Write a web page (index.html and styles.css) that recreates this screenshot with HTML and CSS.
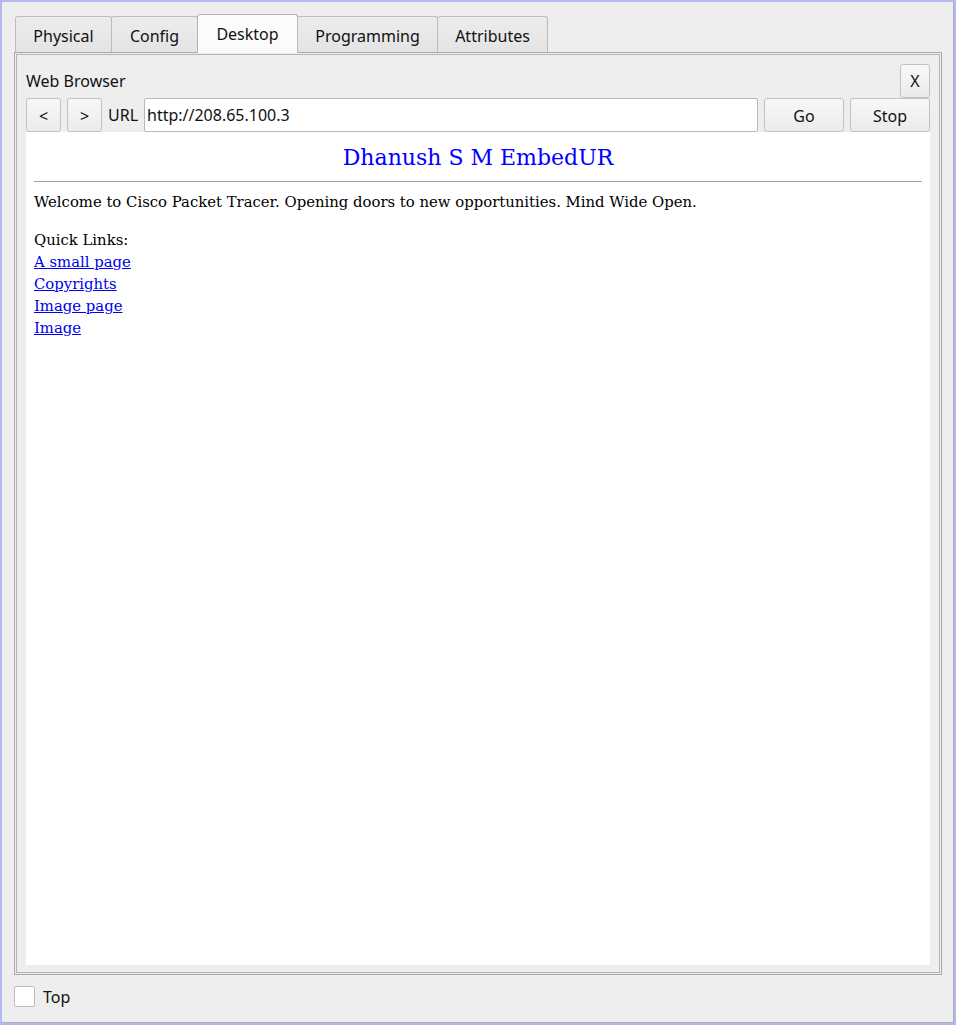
FILE: index.html
```html
<!DOCTYPE html>
<html>
<head>
<meta charset="utf-8">
<link rel="stylesheet" href="styles.css">
</head>
<body>
<div class="window">
  <div class="tabbar">
    <div class="tab t-phys">Physical</div>
    <div class="tab t-conf">Config</div>
    <div class="tab t-desk active">Desktop</div>
    <div class="tab t-prog">Programming</div>
    <div class="tab t-attr">Attributes</div>
  </div>
  <div class="pane">
    <div class="pane-inner">
      <div class="head-row">
        <span class="title">Web Browser</span>
        <button class="btn btn-x">X</button>
      </div>
      <div class="nav-row">
        <button class="btn btn-nav">&lt;</button>
        <button class="btn btn-nav">&gt;</button>
        <span class="url-label">URL</span>
        <div class="url-input">http://208.65.100.3</div>
        <button class="btn btn-wide">Go</button>
        <button class="btn btn-wide">Stop</button>
      </div>
      <div class="webview">
        <div class="heading">Dhanush S M EmbedUR</div>
        <div class="rule"></div>
        <p class="welcome">Welcome to Cisco Packet Tracer. Opening doors to new opportunities. Mind Wide Open.</p>
        <div class="links">
          <div>Quick Links:</div>
          <a href="#">A small page</a>
          <a href="#">Copyrights</a>
          <a href="#">Image page</a>
          <a href="#">Image</a>
        </div>
      </div>
    </div>
  </div>
  <div class="bottom">
    <span class="check"></span>
    <span class="check-label">Top</span>
  </div>
</div>
</body>
</html>
```

FILE: styles.css
```css
html, body {
  margin: 0;
  padding: 0;
  background: #eeeeee;
}
body {
  font-family: "Noto Sans", "Open Sans", sans-serif;
  font-size: 16px;
  color: #111;
}
.window {
  box-sizing: border-box;
  width: 956px;
  height: 1025px;
  border: 2px solid #b3b8f4;
  box-shadow: inset -1px -1px 0 #b0b0b0;
  background: #eeeeee;
  padding: 12px 12px 0 12px;
  display: flex;
  flex-direction: column;
}
.tabbar {
  display: flex;
  align-items: flex-end;
  height: 38px;
  position: relative;
  z-index: 2;
}
.tab {
  box-sizing: border-box;
  height: 36px;
  border: 1px solid #bcbcbc;
  border-bottom: none;
  border-radius: 3px 3px 0 0;
  background: linear-gradient(#ececec, #e4e4e4);
  display: flex;
  align-items: center;
  justify-content: center;
  padding-top: 2px;
  margin-right: -1px;
  color: #111;
}
.tab.t-phys { width: 97px; margin-left: 1px; }
.tab.t-conf { width: 87px; }
.tab.t-desk { width: 101px; }
.tab.t-prog { width: 141px; }
.tab.t-attr { width: 111px; }
.tab.active {
  height: 39px;
  background: #fbfbfb;
  margin-bottom: -1px;
  padding-top: 0;
  padding-bottom: 1px;
  border-color: #b4b4b4;
}
.pane {
  box-sizing: border-box;
  height: 923px;
  width: 928px;
  border: 1px solid #a8a8a8;
  padding: 1px;
  position: relative;
  z-index: 1;
}
.pane-inner {
  box-sizing: border-box;
  height: 100%;
  border: 1px solid #b4b4b4;
  padding: 9px 9px 7px 9px;
  display: flex;
  flex-direction: column;
}
.head-row {
  display: flex;
  align-items: center;
  justify-content: space-between;
  height: 34px;
}
.title {
  font-size: 16px;
}
.btn {
  box-sizing: border-box;
  font-family: "Noto Sans", "Open Sans", sans-serif;
  font-size: 16px;
  color: #111;
  background: linear-gradient(#f8f8f8, #ebebeb);
  border: 1px solid #c2c2c2;
  border-radius: 3px;
  height: 34px;
  padding: 2px 0 0 0;
  margin: 0;
  display: flex;
  align-items: center;
  justify-content: center;
}
.btn-x { width: 30px; padding-top: 0; }
.nav-row {
  display: flex;
  align-items: center;
  height: 34px;
  gap: 6px;
}
.btn-nav { width: 35px; }
.btn-wide { width: 80px; }
.url-label {
  width: 30px;
}
.url-input {
  box-sizing: border-box;
  flex: 1;
  height: 34px;
  background: #ffffff;
  border: 1px solid #b9b9b9;
  border-radius: 2px;
  display: flex;
  align-items: center;
  padding-left: 2px;
  color: #111;
}
.webview {
  flex: 1;
  background: #ffffff;
  padding: 9px 8px 0 8px;
  font-family: "DejaVu Serif", serif;
  font-size: 14.85px;
  line-height: 22px;
  color: #000;
}
.heading {
  text-align: center;
  color: #0000ff;
  font-size: 22px;
  line-height: 34px;
}
.rule {
  height: 1px;
  background: #a0a0a0;
  margin-top: 6px;
}
.welcome {
  margin: 9px 0 0 0;
}
.links {
  margin-top: 16px;
  display: flex;
  flex-direction: column;
  align-items: flex-start;
}
.links a {
  color: #0000ee;
  text-decoration: underline;
}
.bottom {
  flex: 1;
  display: flex;
  align-items: center;
  padding-bottom: 5px;
}
.check {
  box-sizing: border-box;
  width: 21px;
  height: 21px;
  background: #fff;
  border: 1px solid #bdbdbd;
  border-radius: 2px;
}
.check-label {
  margin-left: 8px;
}
```
